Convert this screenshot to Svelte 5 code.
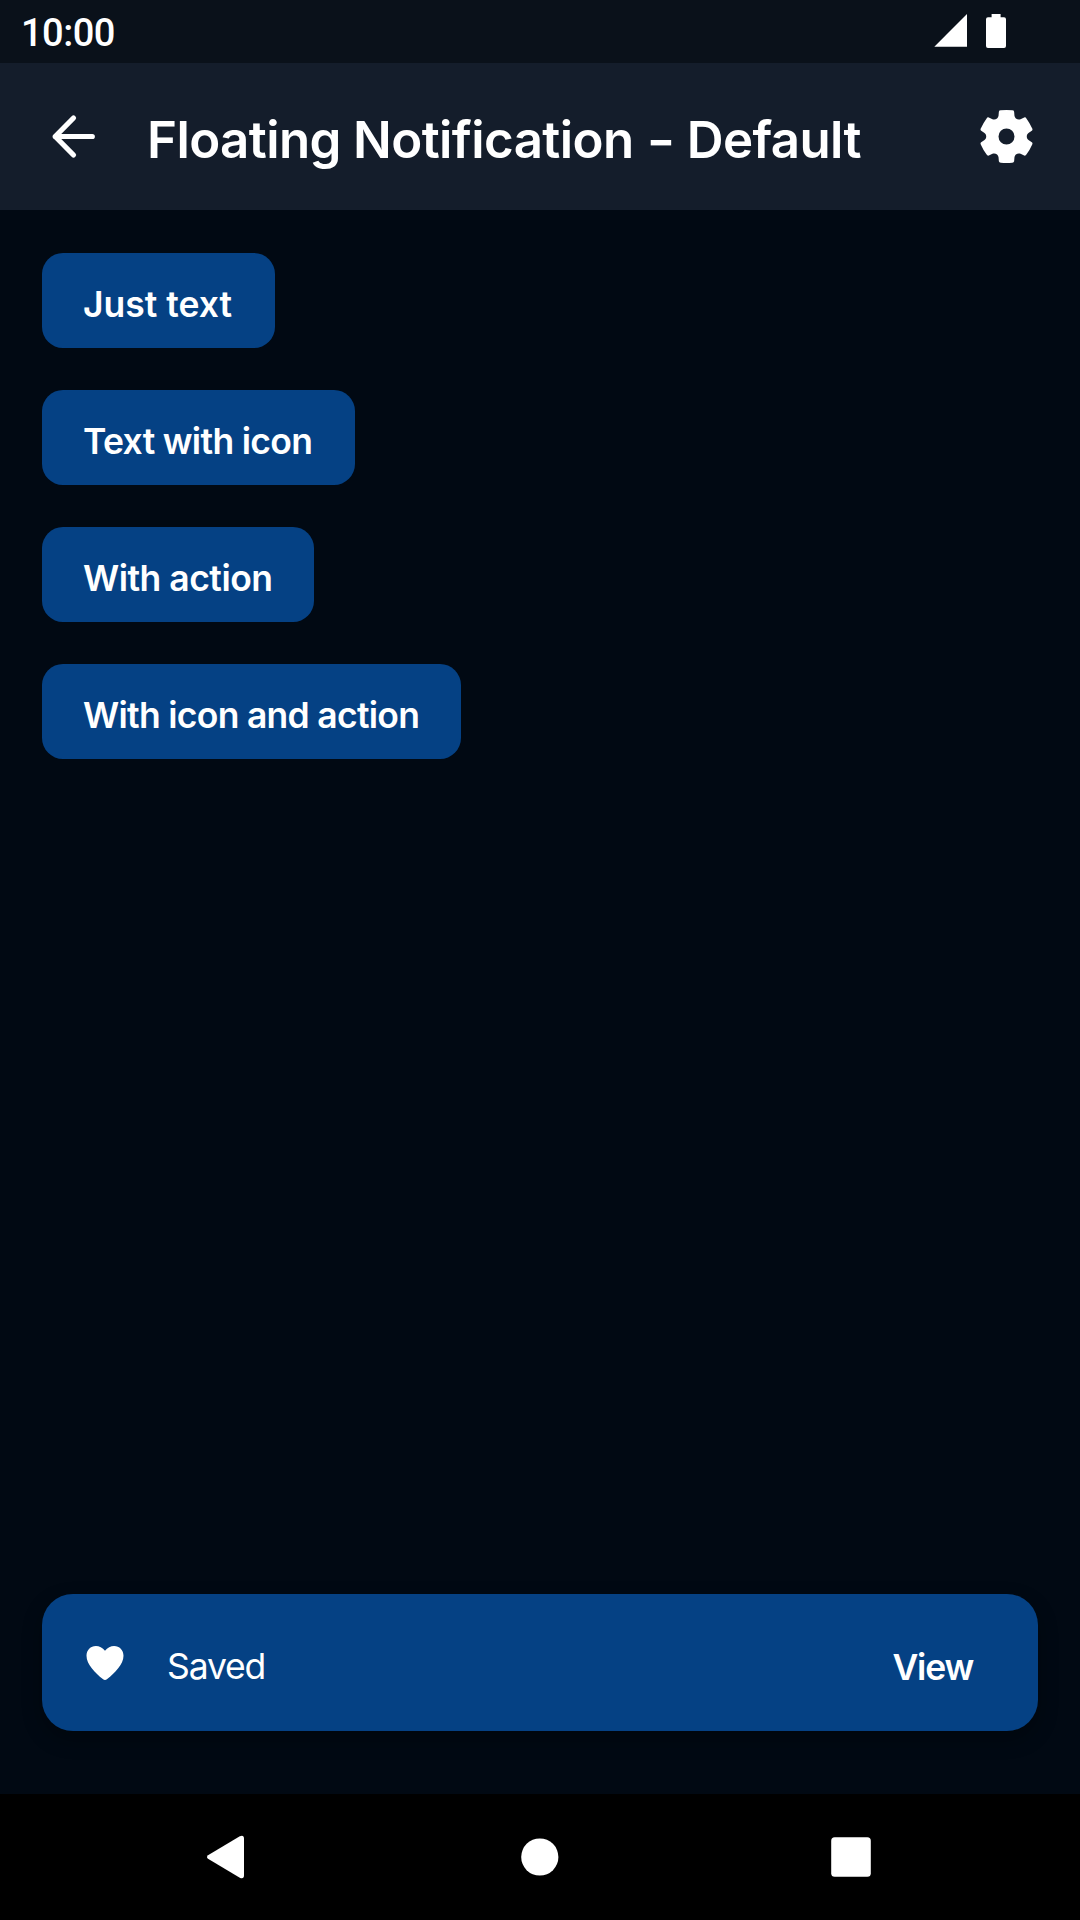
<script>
  const actions = [
    { label: 'Just text', width: 233, tracking: 0 },
    { label: 'Text with icon', width: 313, tracking: -0.68 },
    { label: 'With action', width: 272, tracking: -0.5 },
    { label: 'With icon and action', width: 419, tracking: -0.71 },
  ];

  // One notch of the gear, turned by a multiple of 60 degrees around the centre.
  function notch(turn) {
    const a = (turn * Math.PI) / 3;
    const p = (x, y) =>
      `${(x * Math.cos(a) - y * Math.sin(a)).toFixed(2)} ${(x * Math.sin(a) + y * Math.cos(a)).toFixed(2)}`;
    return (
      `${p(-25.6, 8.2)}Q${p(-26.5, 6.7)} ${p(-25.3, 5.8)}L${p(-22, 3.5)}` +
      `C${p(-19.7, 1.8)} ${p(-19.7, -1.8)} ${p(-22, -3.5)}` +
      `L${p(-25.3, -5.8)}Q${p(-26.5, -6.7)} ${p(-25.6, -8.2)}Q${p(-23.3, -13.45)} `
    );
  }
  const gear =
    'M' + [0, 1, 2, 3, 4, 5].map(notch).join('') + '-25.6 8.2Z' +
    'M-8 0A8 8 0 1 0 8 0A8 8 0 1 0 -8 0Z';
</script>

<div class="screen">
  <div class="status">
    <span class="clock">10:00</span>
    <svg class="indicators" width="76" height="36" viewBox="0 0 76 36" fill="#fff">
      <path d="M.3 33.8 33 1v32.8z" />
      <path d="M57.6 1h9v3.2H70a2 2 0 0 1 2 2V33a2 2 0 0 1-2 2H54a2 2 0 0 1-2-2V6.200a2 2 0 0 1 2-2h3.600z" />
    </svg>
  </div>

  <header>
    <svg class="back" width="63" height="63" viewBox="0 0 63 63" fill="none" stroke="#fff" stroke-width="5.2" stroke-linecap="round" stroke-linejoin="round">
      <path d="M31.500 13 13.200 31.500 31.500 50M13.200 31.500H50.300" />
    </svg>
    <h1>Floating Notification <span class="dash">-</span> Default</h1>
    <svg class="settings" width="63" height="63" viewBox="-31.500 -31.500 63 63" fill="#fff">
      <path fill-rule="evenodd" d={gear} />
    </svg>
  </header>

  <main>
    {#each actions as action}
      <button style:width="{action.width}px" style:letter-spacing="{action.tracking}px">{action.label}</button>
    {/each}
  </main>

  <div class="toast">
    <svg width="42" height="42" viewBox="0 0 42 42" fill="#fff">
      <path d="M21 8.700C18.600 5.400 15.200 3.900 11.900 3.900 6.600 3.900 2.500 8 2.500 13.700c0 8.600 8.700 17.200 16.300 23.400q2.200 1.700 4.400 0C30.800 30.900 39.500 22.300 39.500 13.700c0-5.700-4.100-9.800-9.400-9.800-3.300 0-6.700 1.500-9.100 4.800z" />
    </svg>
    <span class="message">Saved</span>
    <span class="view">View</span>
  </div>

  <nav>
    <svg width="1080" height="126" viewBox="0 0 1080 126" fill="#fff">
      <path d="M208 61.200 239.800 42.300Q244 40.500 244 45V81Q244 85.500 239.800 83.700L208 64.800Q206 63 208 61.200Z" />
      <circle cx="539.800" cy="63" r="18.600" />
      <rect x="831.200" y="43.200" width="39.600" height="39.600" rx="3.500" />
    </svg>
  </nav>
</div>

<style>
  :global(body) {
    margin: 0;
    background: #010913;
  }
  .screen {
    width: 1080px;
    height: 1920px;
    display: flex;
    flex-direction: column;
    background: #010913;
    color: #fff;
    font-family: Inter, 'Liberation Sans', sans-serif;
    overflow: hidden;
  }
  svg {
    display: block;
    flex: none;
  }
  .status {
    height: 63px;
    box-sizing: border-box;
    padding: 0 70px 0 21px;
    display: flex;
    align-items: flex-start;
    justify-content: space-between;
    background: #0a111a;
  }
  .clock {
    padding-top: 10px;
    font: 500 38px/46px Roboto, sans-serif;
    letter-spacing: -0.5px;
  }
  .indicators {
    margin-top: 13px;
  }
  header {
    height: 147px;
    box-sizing: border-box;
    padding: 0 42px;
    display: flex;
    align-items: center;
    background: #141d2b;
  }
  h1 {
    flex: 1;
    margin: 0 0 0 42px;
    padding-top: 6px;
    font-size: 51px;
    line-height: 60px;
    font-weight: 600;
    letter-spacing: -0.6px;
    white-space: nowrap;
  }
  .dash {
    display: inline-block;
    margin: 0 2.5px 0 3px;
    transform: scaleX(1.22);
  }
  main {
    flex: 1;
    padding: 43px 42px 0;
    display: flex;
    flex-direction: column;
    align-items: flex-start;
    gap: 42px;
  }
  button {
    height: 95px;
    box-sizing: border-box;
    padding: 9px 0 0 41px;
    border: 0;
    border-radius: 21px;
    background: #054184;
    color: #fff;
    font: 600 35.5px/44px Inter, sans-serif;
    text-align: left;
    white-space: nowrap;
  }
  .toast {
    height: 137px;
    box-sizing: border-box;
    margin: 0 42px 63px;
    padding: 0 65px 0 42px;
    display: flex;
    align-items: center;
    border-radius: 31px;
    background: #054184;
    box-shadow: 0 8px 20px rgba(0, 0, 0, 0.3);
    font-size: 35.5px;
    line-height: 44px;
  }
  .message {
    flex: 1;
    margin-left: 41px;
    padding-top: 9px;
    letter-spacing: -1.15px;
  }
  .view {
    padding-top: 11px;
    font-weight: 600;
    letter-spacing: -1.2px;
  }
  nav {
    height: 126px;
    background: #000;
  }
</style>
